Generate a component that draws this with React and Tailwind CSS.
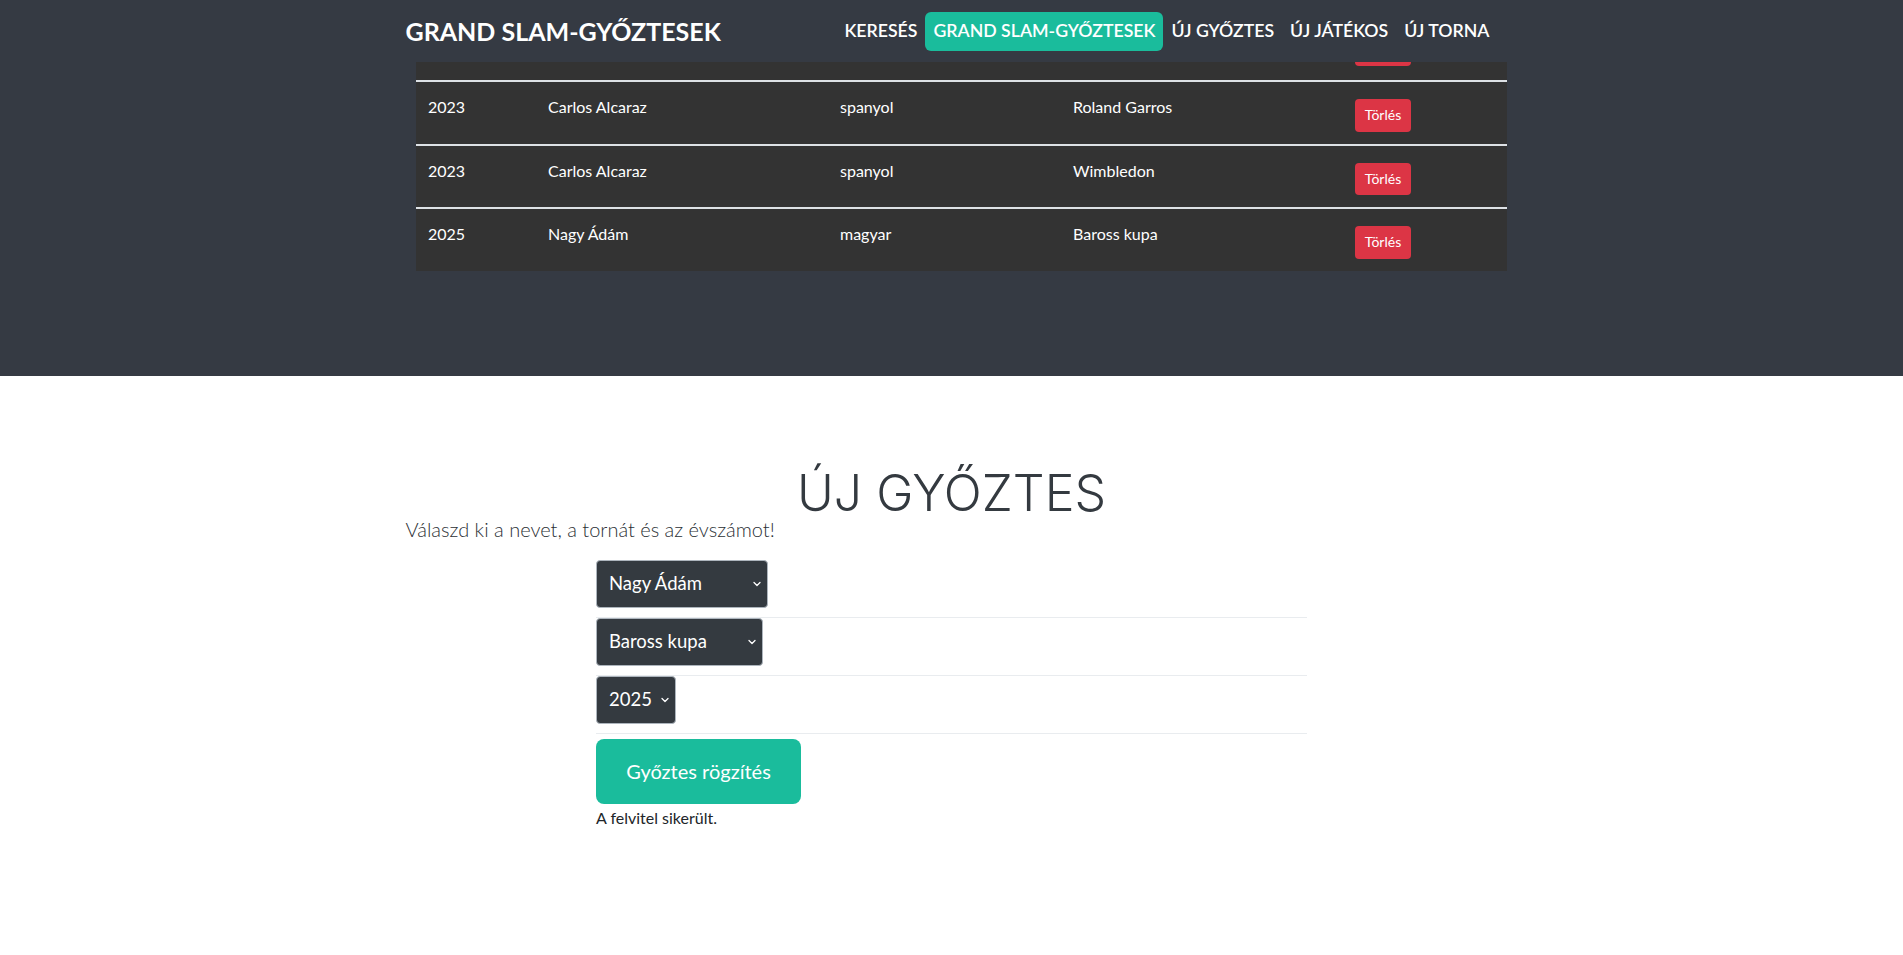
const rows = [
  { year: "", name: "", nat: "", cup: "" },
  { year: "2023", name: "Carlos Alcaraz", nat: "spanyol", cup: "Roland Garros" },
  { year: "2023", name: "Carlos Alcaraz", nat: "spanyol", cup: "Wimbledon" },
  { year: "2025", name: "Nagy Ádám", nat: "magyar", cup: "Baross kupa" },
];

const navItems = ["Keresés", "Grand Slam-győztesek", "Új győztes", "Új játékos", "Új torna"];

function Row({ row, first }) {
  return (
    <div className={`grid h-[63.5px] shrink-0 grid-cols-[120px_292px_233px_282px_1fr] text-[16px] leading-6 text-white ${first ? "" : "border-t-2 border-[#dee2e6]"}`}>
      <div className="px-3 pt-[13px]">{row.year}</div>
      <div className="px-3 pt-[13px]">{row.name}</div>
      <div className="px-3 pt-[13px]">{row.nat}</div>
      <div className="px-3 pt-[13px]">{row.cup}</div>
      <div className="px-3 pt-[17px]">
        <button className="h-[32.5px] w-[56px] rounded-[4px] bg-[#dc3545] text-[14px] text-white">{first ? "" : "Törlés"}</button>
      </div>
    </div>
  );
}

function Chevron() {
  return (
    <svg className="pointer-events-none absolute right-[7px] top-1/2 -translate-y-1/2" width="8" height="6" viewBox="0 0 8 6" fill="none">
      <path d="M1 1.5 L4 4.5 L7 1.5" stroke="#ffffff" strokeWidth="1.3" strokeLinecap="round" strokeLinejoin="round" />
    </svg>
  );
}

function FakeSelect({ value, width }) {
  return (
    <div className={`relative ${width}`}>
      <select defaultValue={value} className="h-[48px] w-full appearance-none rounded-[4px] border border-[#adb5bd] bg-[#343a40] pl-[12px] text-[18.5px] text-white outline-none">
        <option>{value}</option>
      </select>
      <Chevron />
    </div>
  );
}

export default function App() {
  return (
    <div className="min-h-screen bg-white font-['Lato','Liberation_Sans',sans-serif]">
      <section className="bg-[#353a43] pb-[105px]">
        <header className="mx-auto flex h-[62px] w-[1116px] items-center justify-between px-3">
          <h1 className="text-[25px] font-bold leading-[1.2] text-white">GRAND SLAM-GYŐZTESEK</h1>
          <nav className="flex items-center">
            {navItems.map((item, i) => (
              <a
                key={item}
                className={`flex h-[39px] items-center rounded-md px-2 text-[17.7px] font-semibold uppercase text-white ${i === 1 ? "bg-[#1abc9c]" : ""}`}
              >
                {item}
              </a>
            ))}
          </nav>
        </header>
        <div className="mx-auto w-[1116px]">
          <div className="ml-[22.5px] w-[1091px] bg-[#333333]">
            <div className="flex h-[18px] flex-col justify-end overflow-hidden">
              <Row row={rows[0]} first />
            </div>
            {rows.slice(1).map((r, i) => (
              <Row key={i} row={r} />
            ))}
          </div>
        </div>
      </section>

      <section className="mx-auto w-[1116px] px-3 pt-[96px] text-[#343a40]">
        <h2 className="text-center font-['Inter',sans-serif] text-[50px] font-light leading-[42px]">ÚJ GYŐZTES</h2>
        <p className="text-[20px] font-light leading-[30px] text-[#2b3035]">Válaszd ki a nevet, a tornát és az évszámot!</p>
        <form className="mx-auto mt-4 w-[711px]" onSubmit={(e) => e.preventDefault()}>
          <div className="border-b border-[#e9ecef] pb-[9px]">
            <FakeSelect value="Nagy Ádám" width="w-[172px]" />
          </div>
          <div className="border-b border-[#e9ecef] pb-[9px]">
            <FakeSelect value="Baross kupa" width="w-[167px]" />
          </div>
          <div className="border-b border-[#e9ecef] pb-[9px]">
            <FakeSelect value="2025" width="w-[80px]" />
          </div>
          <button className="mt-[5px] h-[65px] w-[205px] rounded-lg bg-[#1abc9c] text-[20px] text-white">Győztes rögzítés</button>
          <p className="mt-[2px] text-[16px] leading-6 text-[#212529]">A felvitel sikerült.</p>
        </form>
      </section>
    </div>
  );
}
